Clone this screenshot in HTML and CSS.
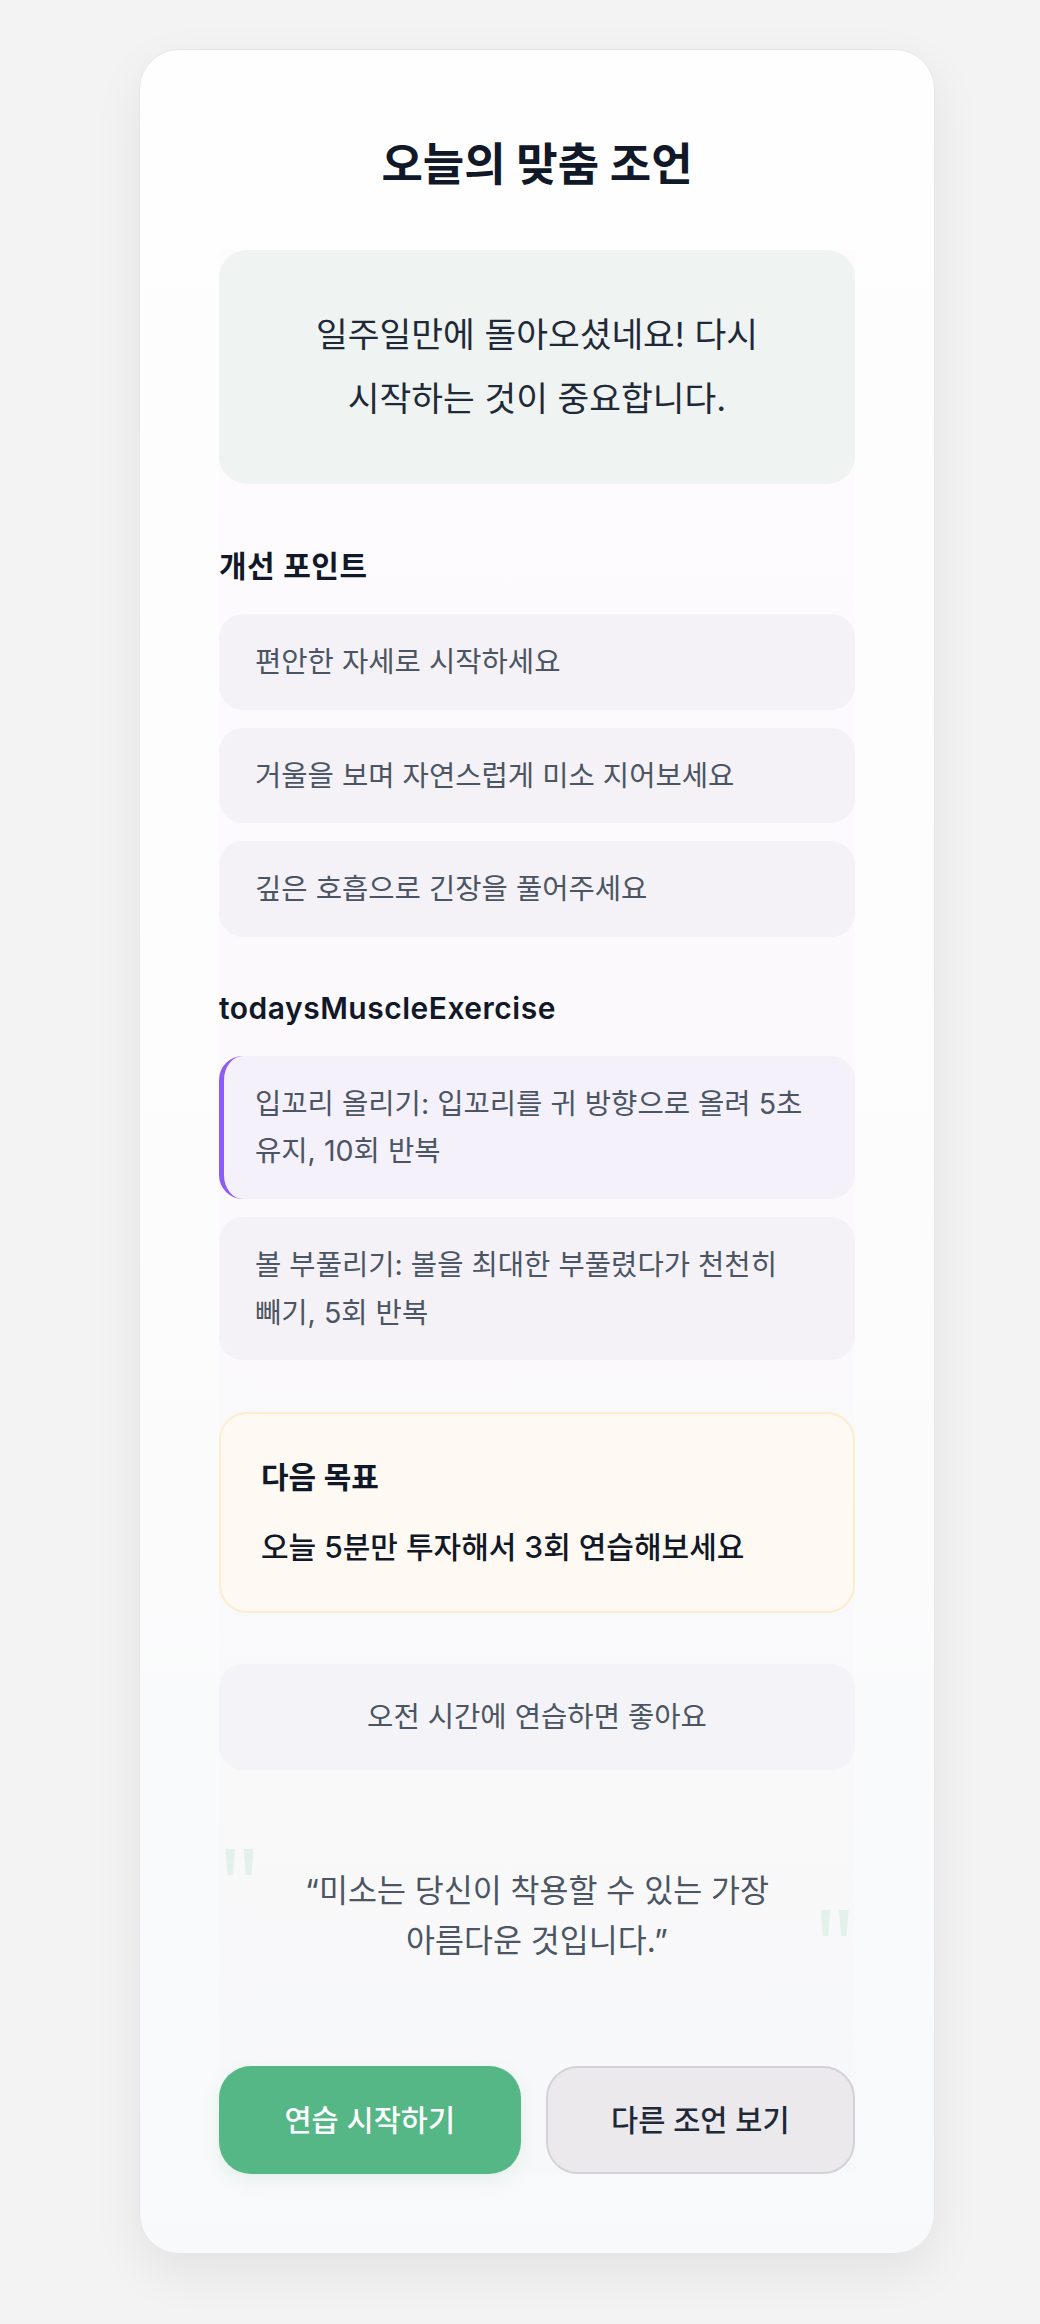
FILE: index.html
```html
<!DOCTYPE html>
<html lang="ko">
<head>
<meta charset="utf-8">
<title>오늘의 맞춤 조언</title>
<link rel="stylesheet" href="styles.css">
</head>
<body>
<div class="page">
  <div class="card">
    <h1 class="title">오늘의 맞춤 조언</h1>
    <div class="content">
      <div class="advice">일주일만에 돌아오셨네요! 다시 시작하는 것이 중요합니다.</div>

      <section class="section section-points">
        <h2 class="section-title">개선 포인트</h2>
        <ul class="list">
          <li class="item">편안한 자세로 시작하세요</li>
          <li class="item">거울을 보며 자연스럽게 미소 지어보세요</li>
          <li class="item">깊은 호흡으로 긴장을 풀어주세요</li>
        </ul>
      </section>

      <section class="section section-exercise">
        <h2 class="section-title">todaysMuscleExercise</h2>
        <ul class="list">
          <li class="item item-active">입꼬리 올리기: 입꼬리를 귀 방향으로 올려 5초 유지, 10회 반복</li>
          <li class="item">볼 부풀리기: 볼을 최대한 부풀렸다가 천천히 빼기, 5회 반복</li>
        </ul>
      </section>

      <div class="goal">
        <h3 class="goal-title">다음 목표</h3>
        <p class="goal-text">오늘 5분만 투자해서 3회 연습해보세요</p>
      </div>

      <div class="tip">오전 시간에 연습하면 좋아요</div>

      <blockquote class="quote">
        <span class="qmark qmark-open" aria-hidden="true">"</span>
        <p class="quote-text">“미소는 당신이 착용할 수 있는 가장 아름다운 것입니다.”</p>
        <span class="qmark qmark-close" aria-hidden="true">"</span>
      </blockquote>

      <div class="actions">
        <button class="btn btn-primary" type="button">연습 시작하기</button>
        <button class="btn btn-secondary" type="button">다른 조언 보기</button>
      </div>
    </div>
  </div>
</div>
</body>
</html>
```

FILE: styles.css
```css
* {
  box-sizing: border-box;
}

html, body {
  margin: 0;
  padding: 0;
}

body {
  background: #f3f3f4;
  font-family: Inter, "Noto Sans CJK KR", "Noto Sans", sans-serif;
  color: #111827;
  word-break: keep-all;
}

.page {
  padding: 49px 0 71px 139px;
}

.card {
  width: 796px;
  padding: 79px 79px 79px;
  border: 1px solid #e6e5ea;
  border-radius: 40px;
  background: linear-gradient(180deg, #fefefe 0%, #fcfcfd 50%, #f8f9fa 100%);
  box-shadow: 0 18px 50px rgba(0, 0, 0, 0.07);
}

.title {
  margin: 0 0 49px;
  font-size: 45px;
  line-height: 72px;
  font-weight: 700;
  text-align: center;
  color: #111827;
}

.content {
  background: linear-gradient(180deg, #fdfbfd 0%, #fbf9fb 50%, #f7f8f9 100%);
}

.advice {
  padding: 53px 48px;
  border-radius: 28px;
  background: #eff3f2;
  font-size: 34.5px;
  line-height: 64px;
  font-weight: 400;
  text-align: center;
  color: #1f2937;
}

.section-points {
  margin-top: 61px;
}

.section-exercise {
  margin-top: 50px;
}

.section-title {
  margin: 0 0 27px;
  font-size: 30px;
  line-height: 42px;
  font-weight: 600;
  letter-spacing: 0.5px;
  color: #111827;
}

.list {
  list-style: none;
  margin: 0;
  padding: 0;
  display: flex;
  flex-direction: column;
  gap: 18px;
}

.item {
  padding: 24px 32px 24px 36px;
  border-radius: 24px;
  background: #f4f2f6;
  font-size: 28.6px;
  line-height: 47.6px;
  color: #4b5563;
}

.item-active {
  background: #f4f1fb;
  border-left: 5px solid #8b5cf6;
  padding-left: 31px;
}

.goal {
  margin-top: 52px;
  padding: 42px 40px 43px;
  border: 2px solid #fcedcc;
  border-radius: 28px;
  background: #fefaf3;
}

.goal-title {
  margin: 0 0 28px;
  font-size: 30px;
  line-height: 42px;
  font-weight: 600;
  color: #111827;
}

.goal-text {
  margin: 0;
  font-size: 30px;
  line-height: 42px;
  font-weight: 500;
  color: #111827;
}

.tip {
  margin-top: 51px;
  padding: 32px;
  border-radius: 24px;
  background: #f4f3f7;
  font-size: 28.6px;
  line-height: 42px;
  text-align: center;
  color: #4b5563;
}

.quote {
  position: relative;
  margin: 44px 0 0;
  padding: 52px 48px 44px;
}

.quote-text {
  margin: 0;
  font-size: 31.5px;
  line-height: 50px;
  text-align: center;
  color: #4b5563;
}

.qmark {
  position: absolute;
  font-family: "Noto Sans", sans-serif;
  font-size: 100px;
  line-height: 1;
  color: #e3f1ea;
}

.qmark-open {
  left: 0;
  top: 18px;
}

.qmark-close {
  right: 0;
  bottom: 17px;
}

.actions {
  display: flex;
  gap: 25px;
  margin-top: 56px;
}

.btn {
  flex: 1 1 auto;
  padding: 31px 24px;
  border: 2px solid transparent;
  border-radius: 32px;
  font-family: Inter, "Noto Sans CJK KR", sans-serif;
  font-size: 29.5px;
  line-height: 42px;
  font-weight: 500;
  cursor: pointer;
}

.btn-primary {
  background: #54b785;
  color: #ffffff;
  box-shadow: 0 6px 18px rgba(84, 183, 133, 0.12);
}

.btn-secondary {
  background: #ebe9ec;
  border-color: #d4d2d6;
  color: #1f2937;
}
```
